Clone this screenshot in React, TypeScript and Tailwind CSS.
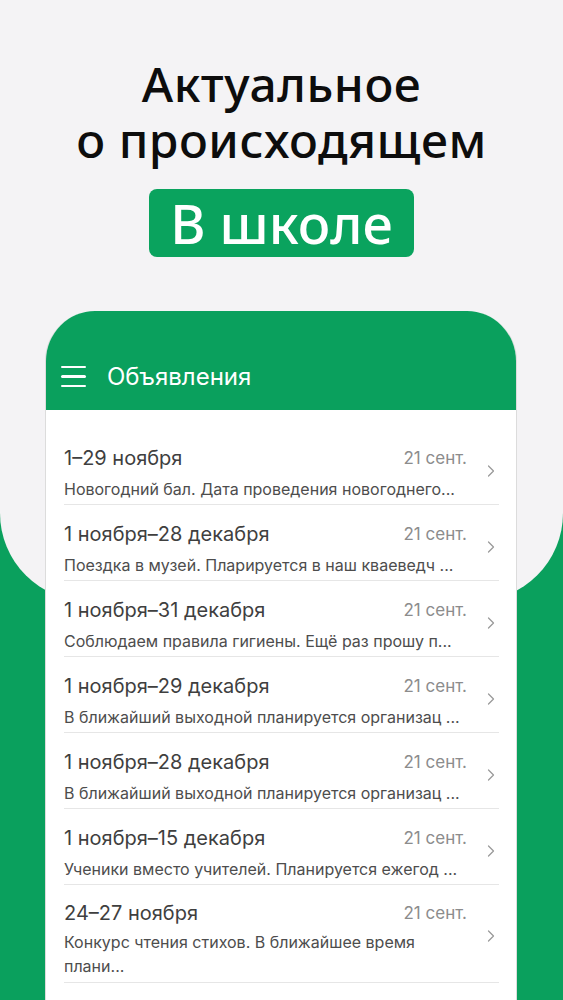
import { ChevronRight } from 'lucide-react'

const ITEMS = [
  { title: '1–29 ноября', text: 'Новогодний бал. Дата проведения новогоднего...' },
  { title: '1 ноября–28 декабря', text: 'Поездка в музей. Пларируется  в наш кваеведч ...' },
  { title: '1 ноября–31 декабря', text: 'Соблюдаем правила гигиены. Ещё раз прошу п...' },
  { title: '1 ноября–29 декабря', text: 'В ближайший выходной планируется организац ...' },
  { title: '1 ноября–28 декабря', text: 'В ближайший выходной планируется организац ...' },
  { title: '1 ноября–15 декабря', text: 'Ученики вместо учителей. Планируется ежегод ...' },
]

function Row({ title, text, multi }: { title: string; text: string; multi?: boolean }) {
  return (
    <div className={`flex items-center border-b border-[#e6e6e6] ml-[18px] mr-[17px] ${multi ? 'pb-[4px]' : 'h-[76px]'}`}>
      <div className={`flex-1 min-w-0 ${multi ? 'pt-[16px]' : 'pt-[13px]'}`}>
        <div className="flex items-center justify-between">
          <span className="text-[20px] leading-[24px] text-[#3f3f3f]">{title}</span>
          <span className="text-[17px] leading-[24px] text-[#8c8c8c]">21 сент.</span>
        </div>
        <p
          className={`text-[16px] leading-[24px] text-[#4d4d4d] ${multi ? 'mt-[5px] w-[380px]' : 'mt-[7px] whitespace-nowrap'}`}
        >
          {text}
        </p>
      </div>
      <div className="w-[32px] flex justify-end shrink-0 mt-[8px]">
        <ChevronRight size={20} strokeWidth={1.5} className="text-[#9a9a9a] -mr-[2px]" />
      </div>
    </div>
  )
}

export default function App() {
  return (
    <div className="relative w-[563px] h-[1000px] overflow-hidden bg-[#0aa05d]" style={{ fontFamily: 'Inter, "Noto Sans", sans-serif' }}>
      {/* light top backdrop */}
      <div className="absolute inset-x-0 top-0 h-[601px] rounded-b-[88px] bg-[#f4f3f5]" />

      <div className="relative flex flex-col items-center">
        <h1
          className="pt-[56px] text-center text-[48px] leading-[56px] font-medium text-[#0d0d0d] tracking-[0.5px]"
          style={{ fontFamily: '"Noto Sans", sans-serif' }}
        >
          <span className="block">Актуальное</span>
          <span className="block">о происходящем</span>
        </h1>
        <div
          className="mt-[21px] h-[68px] px-[21px] flex items-center rounded-[8px] bg-[#0aa35e] text-white text-[54px] font-medium"
          style={{ fontFamily: '"Noto Sans", sans-serif' }}
        >
          В школе
        </div>

        <div className="mt-[54px] w-[472px] self-start ml-[45px] rounded-t-[50px] bg-white border border-[#dcdcdc] border-t-0 overflow-hidden">
          <div className="h-[99px] bg-[#0aa05d] flex items-end pb-[22px] pl-[15px]">
            <div className="flex flex-col gap-[7px] w-[25px] mb-[1px]">
              <span className="h-[2.5px] bg-white rounded" />
              <span className="h-[2.5px] bg-white rounded" />
              <span className="h-[2.5px] bg-white rounded" />
            </div>
            <span className="ml-[21px] text-[24px] leading-[28px] text-white -mb-[3px]">Объявления</span>
          </div>
          <div className="pt-[19px]">
            {ITEMS.map((it, i) => (
              <Row key={i} title={it.title} text={it.text} />
            ))}
            <Row title="24–27 ноября" text="Конкурс чтения стихов. В ближайшее время плани..." multi />
            <div className="h-[40px]" />
          </div>
        </div>
      </div>
    </div>
  )
}
